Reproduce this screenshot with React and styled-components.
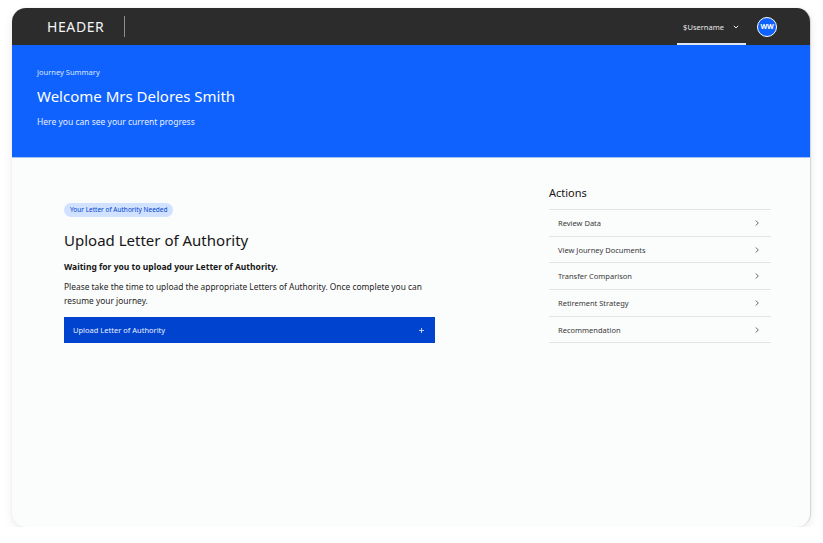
import React from "react";
import styled, { createGlobalStyle } from "styled-components";

const Global = createGlobalStyle`
  html, body { margin: 0; padding: 0; background: #ffffff; }
  body { font-family: "Noto Sans", "Open Sans", sans-serif; }
  * { box-sizing: border-box; }
`;

const Frame = styled.div`
  margin: 8px 12px 0 12px;
  width: 799px;
  height: 519px;
  border-radius: 14px;
  overflow: hidden;
  background: #fbfcfc;
  box-shadow: 0 3px 10px rgba(0, 0, 0, 0.08), 0 0 2px rgba(0, 0, 0, 0.05);
  border-right: 1px solid #d6d6d6;
  display: flex;
  flex-direction: column;
`;

const TopBar = styled.header`
  height: 37px;
  background: #2c2c2c;
  display: flex;
  align-items: center;
  padding: 0 33px 0 35px;
  flex-shrink: 0;
`;

const Brand = styled.div`
  color: #f4f4f4;
  font-size: 14px;
  letter-spacing: 0.6px;
  padding-right: 20px;
  height: 21px;
  display: flex;
  align-items: center;
  border-right: 1px solid #8d8d8d;
`;

const Spacer = styled.div`
  flex: 1;
`;

const UserMenu = styled.div`
  height: 37px;
  width: 69px;
  display: flex;
  align-items: center;
  justify-content: center;
  gap: 8px;
  color: #e8e8e8;
  font-size: 7.5px;
  border-bottom: 2px solid #e0e6f0;
  padding-top: 2px;
  margin-right: 11px;
`;

const Avatar = styled.div`
  width: 20px;
  height: 20px;
  border-radius: 50%;
  background: #0f62fe;
  border: 1.5px solid #ffffff;
  color: #fff;
  font-size: 7px;
  font-weight: 700;
  display: flex;
  align-items: center;
  justify-content: center;
  letter-spacing: -0.2px;
`;

const Hero = styled.section`
  height: 113px;
  background: #0f62fe;
  border-bottom: 1px solid #a6c2f7;
  padding: 22px 25px 0;
  color: #ffffff;
  flex-shrink: 0;
`;

const Eyebrow = styled.div`
  font-size: 7.5px;
  color: #dce6ff;
`;

const HeroTitle = styled.h1`
  margin: 8px 0 0;
  font-weight: 400;
  font-size: 15px;
  line-height: 22px;
`;

const HeroSub = styled.p`
  margin: 9px 0 0;
  font-size: 8.5px;
  color: #e8eeff;
`;

const Main = styled.main`
  flex: 1;
  display: grid;
  grid-template-columns: 371px 222px;
  column-gap: 114px;
  padding: 0 0 0 52px;
`;

const LeftCol = styled.div`
  padding-top: 37px;
`;

const Tag = styled.span`
  display: inline-flex;
  align-items: center;
  height: 14px;
  padding: 0 6px;
  border-radius: 8px;
  background: #d0e2ff;
  color: #0043ce;
  font-size: 6.5px;
`;

const Title = styled.h2`
  margin: 12px 0 0;
  font-weight: 400;
  font-size: 15px;
  line-height: 22px;
  color: #161616;
`;

const Lead = styled.p`
  margin: 10px 0 0;
  font-weight: 700;
  font-size: 8.5px;
  color: #161616;
`;

const Body = styled.p`
  margin: 8px 0 0;
  font-size: 8.4px;
  line-height: 14px;
  color: #262626;
`;

const UploadButton = styled.button`
  margin-top: 9px;
  width: 371px;
  height: 26px;
  background: #0043ce;
  border: none;
  color: #eaf0ff;
  font-family: inherit;
  font-size: 7.5px;
  display: flex;
  align-items: center;
  justify-content: space-between;
  padding: 0 10px 0 9px;
  cursor: pointer;
`;

const RightCol = styled.div`
  padding-top: 27px;
`;

const ActionsTitle = styled.h3`
  margin: 0 0 9px;
  font-weight: 400;
  font-size: 11px;
  color: #161616;
`;

const ActionList = styled.ul`
  list-style: none;
  margin: 0;
  padding: 0;
  border-top: 1px solid #e4e4e4;
`;

const ActionRow = styled.li`
  height: 26.7px;
  border-bottom: 1px solid #e4e4e4;
  display: flex;
  align-items: center;
  justify-content: space-between;
  padding: 0 10px 0 9px;
  font-size: 7.5px;
  color: #393939;
`;

const Chevron = ({ size = 8, color = "#525252" }) => (
  <svg width={size} height={size} viewBox="0 0 8 8" fill="none">
    <path d="M2.8 1.5 L5.3 4 L2.8 6.5" stroke={color} strokeWidth="0.9" />
  </svg>
);

const ChevronDown = () => (
  <svg width="8" height="8" viewBox="0 0 8 8" fill="none">
    <path d="M1.8 2.8 L4 5 L6.2 2.8" stroke="#e8e8e8" strokeWidth="1" />
  </svg>
);

const Plus = () => (
  <svg width="7" height="7" viewBox="0 0 7 7" fill="none">
    <path d="M3.5 1 V6 M1 3.5 H6" stroke="#eaf0ff" strokeWidth="0.8" />
  </svg>
);

const actions = [
  "Review Data",
  "View Journey Documents",
  "Transfer Comparison",
  "Retirement Strategy",
  "Recommendation",
];

export default function App() {
  return (
    <>
      <Global />
      <Frame>
        <TopBar>
          <Brand>HEADER</Brand>
          <Spacer />
          <UserMenu>
            <span>$Username</span>
            <ChevronDown />
          </UserMenu>
          <Avatar>WW</Avatar>
        </TopBar>
        <Hero>
          <Eyebrow>Journey Summary</Eyebrow>
          <HeroTitle>Welcome Mrs Delores Smith</HeroTitle>
          <HeroSub>Here you can see your current progress</HeroSub>
        </Hero>
        <Main>
          <LeftCol>
            <Tag>Your Letter of Authority Needed</Tag>
            <Title>Upload Letter of Authority</Title>
            <Lead>Waiting for you to upload your Letter of Authority.</Lead>
            <Body>
              Please take the time to upload the appropriate Letters of Authority. Once complete you can
              resume your journey.
            </Body>
            <UploadButton>
              <span>Upload Letter of Authority</span>
              <Plus />
            </UploadButton>
          </LeftCol>
          <RightCol>
            <ActionsTitle>Actions</ActionsTitle>
            <ActionList>
              {actions.map((a) => (
                <ActionRow key={a}>
                  <span>{a}</span>
                  <Chevron />
                </ActionRow>
              ))}
            </ActionList>
          </RightCol>
        </Main>
      </Frame>
    </>
  );
}
